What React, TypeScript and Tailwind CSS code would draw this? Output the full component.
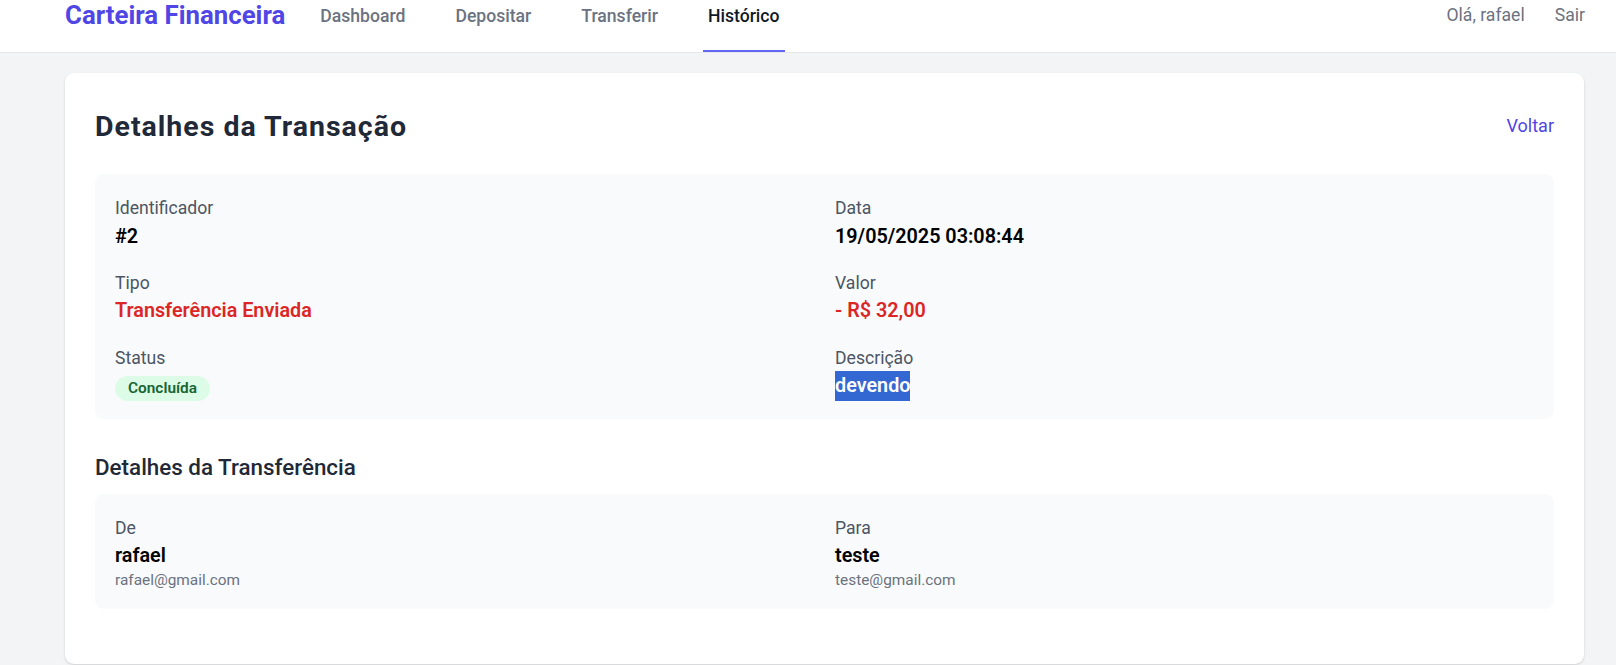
import { ReactNode } from 'react'

const navItems = [
  { label: 'Dashboard', active: false },
  { label: 'Depositar', active: false },
  { label: 'Transferir', active: false },
  { label: 'Histórico', active: true },
]

function Field({ label, children }: { label: string; children: ReactNode }) {
  return (
    <div>
      <p className="text-[17.6px] leading-[26.4px] text-[#4b5563]">{label}</p>
      {children}
    </div>
  )
}

function Value({ children, className = 'text-black' }: { children: ReactNode; className?: string }) {
  return <p className={`text-[19.8px] leading-[30.8px] font-semibold ${className}`}>{children}</p>
}

export default function App() {
  return (
    <div className="min-h-screen bg-[#f3f4f6] font-['Roboto','Liberation_Sans',sans-serif]">
      {/* Top navigation */}
      <header className="h-[53px] bg-white border-b border-[#e5e7eb] flex pl-[65px] pr-[31px]">
        <div className="flex items-start">
          <span className="text-[25.8px] leading-[30px] font-bold text-[#4f46e5]">Carteira Financeira</span>
          <nav className="flex h-full ml-[30px] gap-[40px]">
            {navItems.map((item) => (
              <a
                key={item.label}
                href="#"
                className={`h-full px-[5px] pt-[3px] border-b-2 text-[17.6px] leading-[26.4px] font-medium ${
                  item.active ? 'border-[#6366f1] text-[#111827]' : 'border-transparent text-[#6b7280]'
                }`}
              >
                {item.label}
              </a>
            ))}
          </nav>
        </div>
        <div className="ml-auto flex items-start gap-[30px] pt-[2px] text-[17.6px] leading-[26.4px] text-[#6b7280]">
          <span>Olá, rafael</span>
          <a href="#">Sair</a>
        </div>
      </header>

      <main className="pl-[65px] pr-[32px] pt-[20px]">
        <div className="bg-white rounded-[9px] shadow-[0_1px_3px_rgba(0,0,0,0.1),0_1px_2px_rgba(0,0,0,0.06)] px-[30px] pt-[36px] pb-[55px]">
          <div className="flex items-center justify-between mb-[30px]">
            <h1 className="text-[28.5px] leading-[35.2px] tracking-[1px] font-bold text-[#1f2937]">
              Detalhes da Transação
            </h1>
            <a href="#" className="text-[18px] leading-[26.4px] text-[#4f46e5]">
              Voltar
            </a>
          </div>

          <div className="bg-[#f9fafb] rounded-[9px] px-[20px] pt-[21px] pb-[17px] grid grid-cols-2 gap-x-[21px] gap-y-[17.6px]">
            <Field label="Identificador">
              <Value>#2</Value>
            </Field>
            <Field label="Data">
              <Value>19/05/2025 03:08:44</Value>
            </Field>
            <Field label="Tipo">
              <Value className="text-[#dc2626]">Transferência Enviada</Value>
            </Field>
            <Field label="Valor">
              <Value className="text-[#dc2626]">- R$ 32,00</Value>
            </Field>
            <Field label="Status">
              <span className="mt-[5px] inline-flex items-center h-[25px] px-[13px] rounded-full bg-[#dcfce7] text-[#166534] text-[15.4px] font-semibold">
                Concluída
              </span>
            </Field>
            <Field label="Descrição">
              <p className="text-[19.8px] leading-[30.8px] font-semibold">
                <span className="inline-block leading-[30px] bg-[#3367d1] text-white">devendo</span>
              </p>
            </Field>
          </div>

          <h2 className="mt-[33px] mb-[11px] text-[22.4px] leading-[30.8px] font-medium text-[#1f2937]">
            Detalhes da Transferência
          </h2>

          <div className="bg-[#f9fafb] rounded-[9px] px-[20px] pt-[21px] pb-[21px] grid grid-cols-2 gap-x-[21px]">
            <Field label="De">
              <Value>rafael</Value>
              <p className="text-[15.4px] leading-[16px] text-[#6b7280]">rafael@gmail.com</p>
            </Field>
            <Field label="Para">
              <Value>teste</Value>
              <p className="text-[15.4px] leading-[16px] text-[#6b7280]">teste@gmail.com</p>
            </Field>
          </div>
        </div>
      </main>
    </div>
  )
}
